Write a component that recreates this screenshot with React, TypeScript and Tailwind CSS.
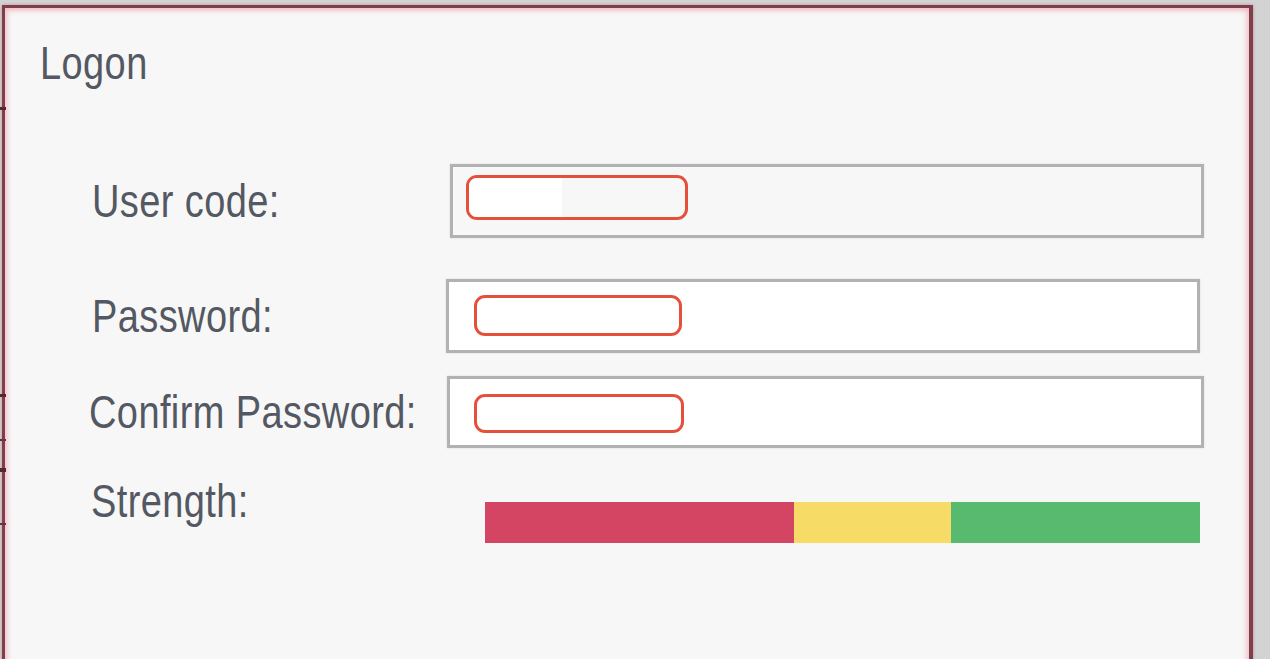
import React from 'react';

const font = { fontFamily: '"Liberation Sans", Arial, sans-serif' };

// Label text is a little taller than Arial in the screenshot, so stretch it vertically
const Label = ({ children }: { children: React.ReactNode }) => (
  <span className="inline-block origin-center scale-y-[1.2] text-[38px] leading-[38px] tracking-[0.4px] text-[#535862] whitespace-nowrap">
    {children}
  </span>
);

// Red rounded marker drawn over each field
const Marker = ({ className, children }: { className: string; children?: React.ReactNode }) => (
  <div className={`rounded-[11px] border-[3px] border-[#e5503b] overflow-hidden flex ${className}`}>
    {children}
  </div>
);

export default function App() {
  return (
    <div className="w-[1270px] h-[659px] overflow-hidden bg-[#d3d3d3] pt-[5px] pl-[2px] relative" style={font}>
      {/* bits of the window behind peeking at the left edge */}
      <div className="absolute left-0 top-[107px] w-[6px] h-[3px] bg-[#5a2530]" />
      <div className="absolute left-0 top-[394px] w-[6px] h-[3px] bg-[#5a2530]" />
      <div className="absolute left-0 top-[439px] w-[6px] h-[2px] bg-[#6a3040]" />
      <div className="absolute left-0 top-[468px] w-[6px] h-[4px] bg-[#5a2530]" />
      <div className="absolute left-0 top-[523px] w-[6px] h-[2px] bg-[#6a3040]" />

      <div className="w-[1251px] h-[720px] bg-[#f7f7f7] border-t-[3px] border-l-[3px] border-r-[4px] border-[#7e3e4a] shadow-[inset_3px_3px_4px_rgba(240,170,180,0.6),inset_-3px_0_4px_rgba(240,170,180,0.6),0_0_3px_#c48a93] flex flex-col">
        {/* Title */}
        <div className="pt-[36px] pl-[35px]">
          <Label>Logon</Label>
        </div>

        {/* User code */}
        <div className="mt-[81px] flex items-center">
          <div className="w-[445px] pl-[87px]">
            <Label>User code:</Label>
          </div>
          <div className="w-[754px] h-[74px] border-[3px] border-[#b2b2b2] bg-[#f7f7f7] pl-[13px] pt-[8px] shadow-[0_0_2px_#dcdcdc]">
            <Marker className="w-[222px] h-[45px]">
              <div className="w-[93px] h-full bg-white" />
            </Marker>
          </div>
        </div>

        {/* Password */}
        <div className="mt-[41px] flex items-center">
          <div className="w-[441px] pl-[87px]">
            <Label>Password:</Label>
          </div>
          <div className="w-[754px] h-[74px] border-[3px] border-[#b2b2b2] bg-white pl-[25px] pt-[13px] shadow-[0_0_2px_#dcdcdc]">
            <Marker className="w-[208px] h-[41px] bg-white" />
          </div>
        </div>

        {/* Confirm Password */}
        <div className="mt-[23px] flex items-center">
          <div className="w-[442px] pl-[84px]">
            <Label>Confirm Password:</Label>
          </div>
          <div className="w-[757px] h-[72px] border-[3px] border-[#b2b2b2] bg-white pl-[24px] pt-[15px] shadow-[0_0_2px_#dcdcdc]">
            <Marker className="w-[210px] h-[39px] bg-white" />
          </div>
        </div>

        {/* Strength */}
        <div className="mt-[34px] flex items-start">
          <div className="w-[480px] pl-[86px]">
            <Label>Strength:</Label>
          </div>
          <div className="mt-[20px] flex h-[41px] w-[715px]">
            <div className="w-[309px] bg-[#d44463]" />
            <div className="w-[157px] bg-[#f6dc67]" />
            <div className="flex-1 bg-[#57ba6e]" />
          </div>
        </div>
      </div>
    </div>
  );
}
